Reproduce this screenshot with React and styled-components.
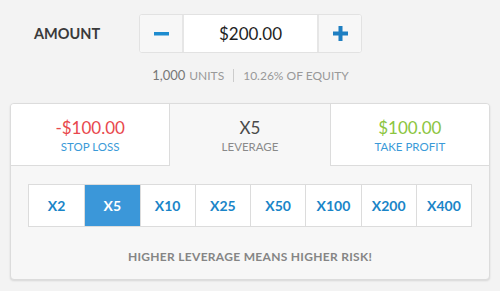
import React from "react";
import styled, { createGlobalStyle } from "styled-components";

const GlobalStyle = createGlobalStyle`
	body {
		margin: 0;
		background: #f3f3f3;
		font-family: Lato, "Open Sans", "Liberation Sans", sans-serif;
	}
`;

const Page = styled.div`
	width: 500px;
	height: 291px;
	padding-top: 14px;
	box-sizing: border-box;
`;

const AmountRow = styled.div`
	display: flex;
	align-items: flex-start;
	padding-left: 34px;
`;

const Label = styled.div`
	width: 105px;
	height: 39px;
	line-height: 39px;
	font-size: 14.5px;
	font-weight: 700;
	color: #3a3a3a;
`;

const AmountColumn = styled.div`
	width: 223px;
	display: flex;
	flex-direction: column;
	align-items: center;
`;

const Stepper = styled.div`
	display: flex;
	width: 100%;
	height: 39px;
	border: 1px solid #e2e2e2;
	border-radius: 3px;
	box-sizing: border-box;
	background: #fff;
	overflow: hidden;
`;

const StepButton = styled.button`
	width: 44px;
	flex: none;
	border: none;
	${p => (p.$side === "left" ? "border-right" : "border-left")}: 2px solid #e6e6e6;
	background: #f7f7f7;
	display: flex;
	align-items: center;
	justify-content: center;
	padding: 0;
	cursor: pointer;
`;

const AmountValue = styled.div`
	flex: 1;
	display: flex;
	align-items: center;
	justify-content: center;
	font-size: 17px;
	color: #1f1f1f;
`;

const SubInfo = styled.div`
	margin-top: 14px;
	display: flex;
	align-items: center;
	height: 16px;
	color: #777;
	font-size: 13px;
`;

const Unit = styled.span`
	font-size: 12px;
	color: #999;
	margin-left: 4px;
`;

const Divider = styled.span`
	width: 1px;
	height: 13px;
	background: #ccc;
	margin: 0 9px;
`;

const Equity = styled.span`
	font-size: 12px;
	color: #999;
`;

const Card = styled.div`
	margin: 20px 10px 0;
	border: 1px solid #dcdcdc;
	border-radius: 4px;
	background: #f7f7f7;
	box-shadow: 0 1px 2px rgba(0, 0, 0, 0.12);
	overflow: hidden;
`;

const Tabs = styled.div`
	display: grid;
	grid-template-columns: 1fr 1fr 1fr;
	height: 62px;
`;

const Tab = styled.div`
	display: flex;
	flex-direction: column;
	align-items: center;
	justify-content: center;
	box-sizing: border-box;
	padding-top: 2px;
	background: ${p => (p.$active ? "transparent" : "#fff")};
	border-bottom: ${p => (p.$active ? "none" : "1px solid #dcdcdc")};
	${p => p.$left && "border-right: 1px solid #dcdcdc;"}
	${p => p.$right && "border-left: 1px solid #dcdcdc;"}
`;

const TabValue = styled.div`
	font-size: 17px;
	line-height: 20px;
	color: ${p => p.$color};
`;

const TabLabel = styled.div`
	margin-top: 1px;
	font-size: 11.5px;
	line-height: 15px;
	color: ${p => p.$color};
`;

const Body = styled.div`
	padding: 18px 17px 14px;
`;

const Levels = styled.div`
	display: grid;
	grid-template-columns: repeat(8, 1fr);
	height: 41px;
	border: 1px solid #dcdcdc;
	background: #fff;
`;

const Level = styled.button`
	border: none;
	border-left: ${p => (p.$first ? "none" : "1px solid #dcdcdc")};
	background: ${p => (p.$active ? "#3b97d9" : "#fff")};
	color: ${p => (p.$active ? "#fff" : "#1a85c8")};
	font-family: inherit;
	font-size: 14px;
	font-weight: 700;
	padding: 0;
	cursor: pointer;
`;

const Warning = styled.div`
	margin-top: 22px;
	text-align: center;
	font-size: 12px;
	line-height: 16px;
	font-weight: 700;
	letter-spacing: 0.3px;
	color: #858585;
`;

const levels = ["X2", "X5", "X10", "X25", "X50", "X100", "X200", "X400"];

function MinusIcon() {
	return (
		<svg width="15" height="4" viewBox="0 0 15 4">
			<rect width="15" height="3.5" fill="#1e8ccf" />
		</svg>
	);
}

function PlusIcon() {
	return (
		<svg width="15" height="15" viewBox="0 0 15 15">
			<rect x="5.5" y="0" width="4" height="15" fill="#1e7fc2" />
			<rect x="0" y="5.5" width="15" height="4" fill="#1e7fc2" />
		</svg>
	);
}

export default function App() {
	return (
		<Page>
			<GlobalStyle />
			<AmountRow>
				<Label>AMOUNT</Label>
				<AmountColumn>
					<Stepper>
						<StepButton $side="left">
							<MinusIcon />
						</StepButton>
						<AmountValue>$200.00</AmountValue>
						<StepButton $side="right">
							<PlusIcon />
						</StepButton>
					</Stepper>
					<SubInfo>
						1,000<Unit>UNITS</Unit>
						<Divider />
						<Equity>10.26% OF EQUITY</Equity>
					</SubInfo>
				</AmountColumn>
			</AmountRow>
			<Card>
				<Tabs>
					<Tab $left>
						<TabValue $color="#e8484d">-$100.00</TabValue>
						<TabLabel $color="#3a9ad8">STOP LOSS</TabLabel>
					</Tab>
					<Tab $active>
						<TabValue $color="#4a4a4a">X5</TabValue>
						<TabLabel $color="#8a8a8a">LEVERAGE</TabLabel>
					</Tab>
					<Tab $right>
						<TabValue $color="#8cc540">$100.00</TabValue>
						<TabLabel $color="#3a9ad8">TAKE PROFIT</TabLabel>
					</Tab>
				</Tabs>
				<Body>
					<Levels>
						{levels.map((l, i) => (
							<Level key={l} $first={i === 0} $active={l === "X5"}>
								{l}
							</Level>
						))}
					</Levels>
					<Warning>HIGHER LEVERAGE MEANS HIGHER RISK!</Warning>
				</Body>
			</Card>
		</Page>
	);
}
